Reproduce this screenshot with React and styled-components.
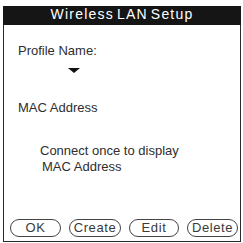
import React from 'react'
import styled, { createGlobalStyle } from 'styled-components'

const GlobalStyle = createGlobalStyle`
	body {
		margin: 0;
		background: #ffffff;
		font-family: 'Liberation Sans', Arial, sans-serif;
		color: #2e2e2e;
	}
`

const Screen = styled.div`
	width: 243px;
	height: 243px;
	padding: 6px 2px 1px 3px;
	box-sizing: border-box;
`

const Dialog = styled.div`
	height: 100%;
	border: 1px solid #2a2a2a;
	border-top: none;
	display: flex;
	flex-direction: column;
	box-sizing: border-box;
`

const TitleBar = styled.div`
	height: 19px;
	background: #151515;
	color: #ffffff;
	font-size: 14px;
	line-height: 17px;
	text-align: center;
	letter-spacing: 1.2px;
	word-spacing: -2px;
	margin: 0 -1px;
`

const Body = styled.div`
	flex: 1;
	padding: 0 0 0 14px;
	display: flex;
	flex-direction: column;
`

const Label = styled.div`
	font-size: 13px;
	line-height: 14px;
	margin-top: ${(p) => p.top}px;
`

const Picker = styled.div`
	margin: 10px 0 0 50px;
	width: 0;
	height: 0;
	border-left: 6px solid transparent;
	border-right: 6px solid transparent;
	border-top: 5px solid #111111;
`

const Note = styled.div`
	font-size: 13px;
	line-height: 16px;
	margin: 28px 0 0 22px;
`

const NoteLine = styled.div`
	padding-left: ${(p) => p.indent || 0}px;
`

const Buttons = styled.div`
	display: flex;
	justify-content: space-between;
	padding: 0 2px 4px 6px;
`

const Button = styled.button`
	width: ${(p) => p.w}px;
	height: 18px;
	border: 1px solid #444444;
	border-radius: 9px;
	background: #ffffff;
	font-family: 'Liberation Sans', Arial, sans-serif;
	font-size: 13px;
	letter-spacing: 0.6px;
	color: #3a3a3a;
	padding: 0;
	line-height: 16px;
`

const App = () => {
	return (
		<Screen>
			<GlobalStyle />
			<Dialog>
				<TitleBar>Wireless LAN Setup</TitleBar>
				<Body>
					<Label top={19}>Profile Name:</Label>
					<Picker />
					<Label top={28}>MAC Address</Label>
					<Note>
						<NoteLine>Connect once to display</NoteLine>
						<NoteLine indent={2}>MAC Address</NoteLine>
					</Note>
				</Body>
				<Buttons>
					<Button w={51}>OK</Button>
					<Button w={52}>Create</Button>
					<Button w={50}>Edit</Button>
					<Button w={51}>Delete</Button>
				</Buttons>
			</Dialog>
		</Screen>
	)
}

export default App
